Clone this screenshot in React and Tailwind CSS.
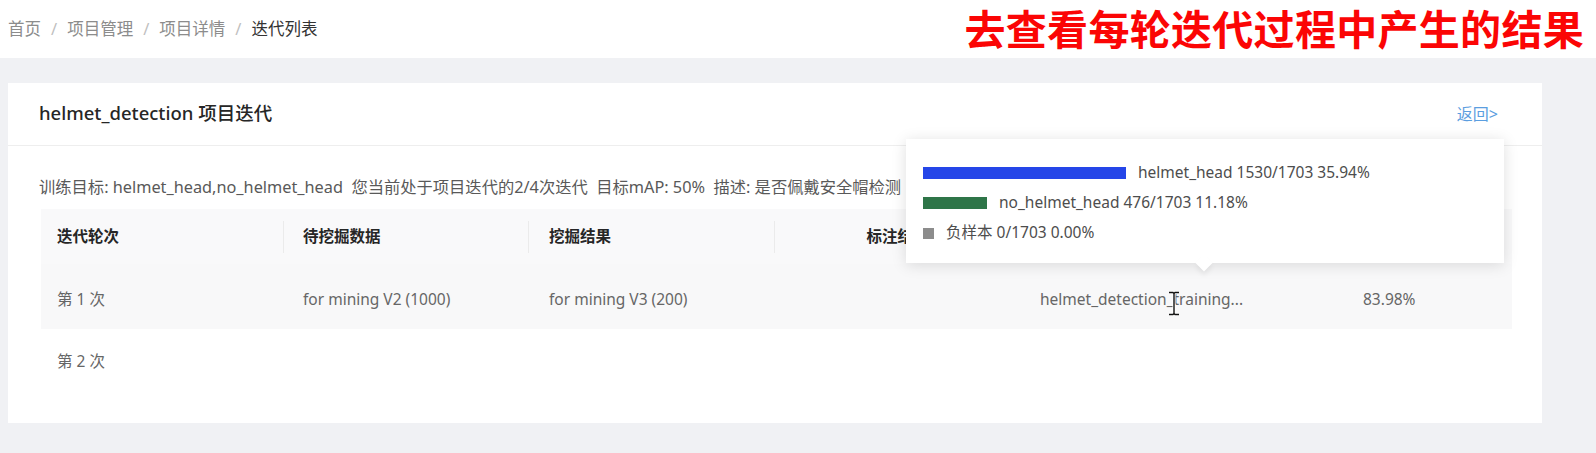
import React from 'react'

const crumbs = ['首页', '项目管理', '项目详情']

const legend = [
  { color: 'bg-[#2546e8]', w: 'w-[203px]', h: 'h-[12px]', text: 'helmet_head 1530/1703 35.94%' },
  { color: 'bg-[#2e7548]', w: 'w-[64px]', h: 'h-[12px]', text: 'no_helmet_head 476/1703 11.18%' },
  { color: 'bg-[#8c8c8c]', w: 'w-[11px]', h: 'h-[11px]', text: '负样本 0/1703 0.00%' },
]

function Popover() {
  return (
    <div className="absolute left-[906px] top-[139px] w-[598px] h-[124px] bg-white shadow-[0_2px_14px_rgba(0,0,0,0.13)] pl-[17px] pt-[19px]">
      {legend.map((l) => (
        <div key={l.text} className="h-[30px] flex items-center gap-[12px]">
          <span className={`${l.color} ${l.w} ${l.h} shrink-0`} />
          <span className="text-[15.5px] text-[#4d4d4d]">{l.text}</span>
        </div>
      ))}
      <div className="absolute left-[292px] -bottom-[6px] w-[12px] h-[12px] bg-white rotate-45 shadow-[3px_3px_5px_rgba(0,0,0,0.06)]" />
    </div>
  )
}

function IBeam() {
  return (
    <svg className="absolute left-[1167px] top-[291px]" width="14" height="25" viewBox="0 0 14 25">
      <path d="M2 1.5h4l1 1 1-1h4M7 2.5v20M2 23.5h4l1-1 1 1h4" fill="none" stroke="#fff" strokeWidth="3" />
      <path d="M2 1.5h4l1 1 1-1h4M7 2.5v20M2 23.5h4l1-1 1 1h4" fill="none" stroke="#111" strokeWidth="1.4" />
    </svg>
  )
}

export default function App() {
  return (
    <div className="relative w-[1596px] h-[453px] overflow-hidden bg-[#f0f1f4] font-['Noto_Sans','Noto_Sans_CJK_SC',sans-serif]">
      {/* top bar */}
      <div className="h-[58px] bg-white flex items-center justify-between pl-[8px] pr-[12px]">
        <div className="flex items-center text-[16.5px] text-[#8c8c8c]">
          {crumbs.map((c) => (
            <React.Fragment key={c}>
              <span>{c}</span>
              <span className="mx-[10px] text-[#bfbfbf]">/</span>
            </React.Fragment>
          ))}
          <span className="text-[#333]">迭代列表</span>
        </div>
        <div className="text-[41px] leading-none font-bold text-[#fb0505] tracking-[0.3px]">去查看每轮迭代过程中产生的结果</div>
      </div>

      <div className="pt-[25px] pl-[8px] pr-[54px]">
        <div className="h-[340px] bg-white">
          <div className="h-[63px] border-b border-[#eeeeee] flex items-center justify-between pl-[31px] pr-[44px]">
            <span className="text-[18.5px] font-medium text-[#262626] -mt-[3px]">helmet_detection 项目迭代</span>
            <span className="text-[16px] text-[#5b9ee0]">返回&gt;</span>
          </div>

          <div className="pl-[31px] pr-[30px] pt-[29px]">
            <div className="text-[16.3px] leading-[24px] text-[#595959] whitespace-pre">
              训练目标: helmet_head,no_helmet_head  您当前处于项目迭代的2/4次迭代  目标mAP: 50%  描述: 是否佩戴安全帽检测
            </div>

            <div className="mt-[10px] ml-[2px] text-[15.5px]">
              <div className="h-[55px] bg-[#f9f9fa] flex items-center font-bold text-[#262626]">
                <div className="w-[242px] pl-[16px]">迭代轮次</div>
                <div className="w-px h-[32px] bg-[#ebebeb]" />
                <div className="w-[244px] pl-[19px]">待挖掘数据</div>
                <div className="w-px h-[32px] bg-[#ebebeb]" />
                <div className="w-[245px] pl-[20px]">挖掘结果</div>
                <div className="w-px h-[32px] bg-[#ebebeb]" />
                <div className="w-[245px] text-center">标注结果</div>
              </div>

              <div className="h-[65px] pt-[7px] bg-[#f8f8f9] flex items-center text-[#666]">
                <div className="w-[242px] pl-[16px]">第 1 次</div>
                <div className="w-[245px] pl-[20px]">for mining V2 (1000)</div>
                <div className="w-[246px] pl-[21px]">for mining V3 (200)</div>
                <div className="w-[246px]" />
                <div className="w-[323px] pl-[20px]">helmet_detection_training...</div>
                <div className="pl-[20px]">83.98%</div>
              </div>

              <div className="h-[66px] flex items-center text-[#666]">
                <div className="w-[242px] pl-[16px]">第 2 次</div>
              </div>
            </div>
          </div>
        </div>
      </div>

      <Popover />
      <IBeam />
    </div>
  )
}
